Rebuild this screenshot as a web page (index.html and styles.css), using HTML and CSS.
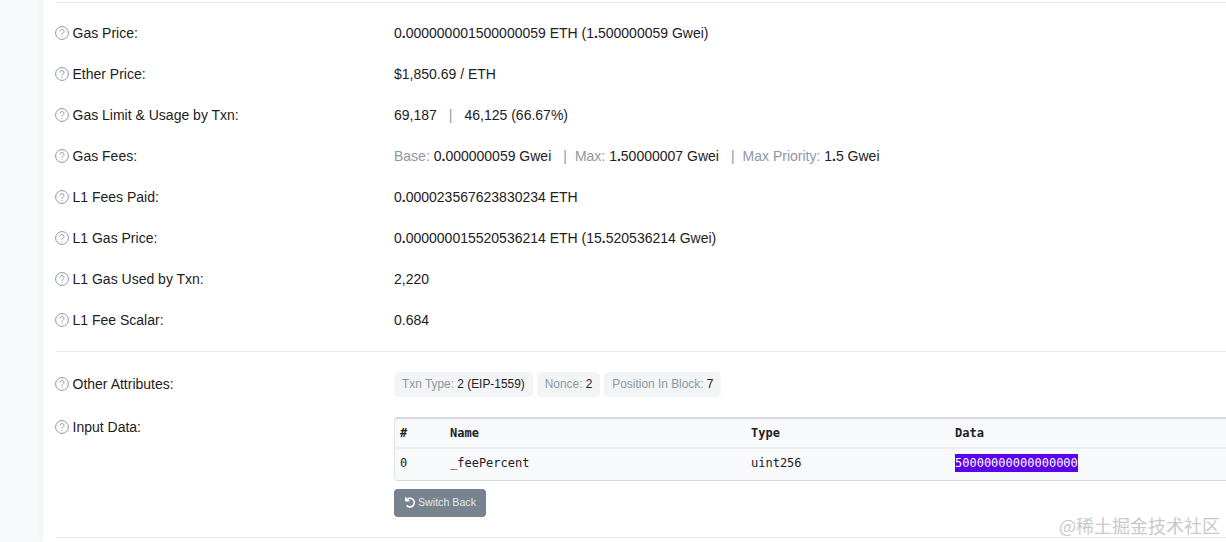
FILE: index.html
```html
<!DOCTYPE html>
<html lang="en">
<head>
<meta charset="utf-8">
<title>Transaction details</title>
<link rel="stylesheet" href="styles.css">
</head>
<body>
<main class="card">
  <hr class="rule rule-top">
  <section class="rows">
    <div class="row"><div class="label"><svg class="help" viewBox="0 0 14 14"><circle cx="7" cy="7" r="6.4"/><path d="M5.1 5.5a1.95 1.95 0 1 1 3 1.65c-.7.45-1.1.8-1.1 1.6"/><path d="M7 10v.9"/></svg>Gas Price:</div><div class="value">0<b>.</b>000000001500000059 ETH (1<b>.</b>500000059 Gwei)</div></div>
    <div class="row"><div class="label"><svg class="help" viewBox="0 0 14 14"><circle cx="7" cy="7" r="6.4"/><path d="M5.1 5.5a1.95 1.95 0 1 1 3 1.65c-.7.45-1.1.8-1.1 1.6"/><path d="M7 10v.9"/></svg>Ether Price:</div><div class="value">$1,850.69 / ETH</div></div>
    <div class="row"><div class="label"><svg class="help" viewBox="0 0 14 14"><circle cx="7" cy="7" r="6.4"/><path d="M5.1 5.5a1.95 1.95 0 1 1 3 1.65c-.7.45-1.1.8-1.1 1.6"/><path d="M7 10v.9"/></svg>Gas Limit &amp; Usage by Txn:</div><div class="value">69,187<span class="sep sep-wide">|</span>46,125 (66.67%)</div></div>
    <div class="row"><div class="label"><svg class="help" viewBox="0 0 14 14"><circle cx="7" cy="7" r="6.4"/><path d="M5.1 5.5a1.95 1.95 0 1 1 3 1.65c-.7.45-1.1.8-1.1 1.6"/><path d="M7 10v.9"/></svg>Gas Fees:</div><div class="value"><span class="muted">Base: </span>0<b>.</b>000000059 Gwei<span class="sep">|</span><span class="muted">Max: </span>1<b>.</b>50000007 Gwei<span class="sep">|</span><span class="muted">Max Priority: </span>1<b>.</b>5 Gwei</div></div>
    <div class="row"><div class="label"><svg class="help" viewBox="0 0 14 14"><circle cx="7" cy="7" r="6.4"/><path d="M5.1 5.5a1.95 1.95 0 1 1 3 1.65c-.7.45-1.1.8-1.1 1.6"/><path d="M7 10v.9"/></svg>L1 Fees Paid:</div><div class="value">0<b>.</b>000023567623830234 ETH</div></div>
    <div class="row"><div class="label"><svg class="help" viewBox="0 0 14 14"><circle cx="7" cy="7" r="6.4"/><path d="M5.1 5.5a1.95 1.95 0 1 1 3 1.65c-.7.45-1.1.8-1.1 1.6"/><path d="M7 10v.9"/></svg>L1 Gas Price:</div><div class="value">0<b>.</b>000000015520536214 ETH (15<b>.</b>520536214 Gwei)</div></div>
    <div class="row"><div class="label"><svg class="help" viewBox="0 0 14 14"><circle cx="7" cy="7" r="6.4"/><path d="M5.1 5.5a1.95 1.95 0 1 1 3 1.65c-.7.45-1.1.8-1.1 1.6"/><path d="M7 10v.9"/></svg>L1 Gas Used by Txn:</div><div class="value">2,220</div></div>
    <div class="row"><div class="label"><svg class="help" viewBox="0 0 14 14"><circle cx="7" cy="7" r="6.4"/><path d="M5.1 5.5a1.95 1.95 0 1 1 3 1.65c-.7.45-1.1.8-1.1 1.6"/><path d="M7 10v.9"/></svg>L1 Fee Scalar:</div><div class="value">0.684</div></div>
  </section>
  <hr class="rule">
  <section class="attrs">
    <div class="label label-attrs"><svg class="help" viewBox="0 0 14 14"><circle cx="7" cy="7" r="6.4"/><path d="M5.1 5.5a1.95 1.95 0 1 1 3 1.65c-.7.45-1.1.8-1.1 1.6"/><path d="M7 10v.9"/></svg>Other Attributes:</div>
    <div class="chips">
      <span class="chip"><span class="muted">Txn Type: </span>2 (EIP-1559)</span>
      <span class="chip"><span class="muted">Nonce: </span>2</span>
      <span class="chip"><span class="muted">Position In Block: </span>7</span>
    </div>
  </section>
  <section class="input">
    <div class="label label-top"><svg class="help" viewBox="0 0 14 14"><circle cx="7" cy="7" r="6.4"/><path d="M5.1 5.5a1.95 1.95 0 1 1 3 1.65c-.7.45-1.1.8-1.1 1.6"/><path d="M7 10v.9"/></svg>Input Data:</div>
    <div class="input-body">
      <div class="decoded">
        <div class="tr th"><span>#</span><span>Name</span><span>Type</span><span>Data</span></div>
        <div class="tr td"><span>0</span><span>_feePercent</span><span>uint256</span><span><mark class="sel">50000000000000000</mark></span></div>
      </div>
      <button class="btn" type="button"><svg class="undo" viewBox="0 0 12 12"><path d="M1.8 1.2v3.6h3.6"/><path d="M2.2 4.6A4.3 4.3 0 1 1 2.6 9.2"/></svg>Switch Back</button>
    </div>
  </section>
  <hr class="rule">
</main>
<div class="watermark">@稀土掘金技术社区</div>
</body>
</html>
```

FILE: styles.css
```css
html, body {
  margin: 0;
  height: 542px;
  overflow: hidden;
}
body {
  background: #f8f9fa;
  font-family: "Liberation Sans", Arial, sans-serif;
  font-size: 14px;
  color: #1e2022;
  position: relative;
}
.card {
  margin-left: 43px;
  width: 1300px;
  height: 542px;
  padding: 2px 13px 0;
  box-sizing: border-box;
  background: #fff;
  box-shadow: 0 0 6px rgba(151, 164, 175, .18);
}
.rule {
  margin: 0;
  border: 0;
  border-top: 1px solid #e7eaf3;
}
.rows {
  padding: 9px 0 11px;
}
.row {
  display: flex;
  align-items: center;
  height: 41px;
}
.label {
  width: 338px;
  flex: none;
  display: flex;
  align-items: center;
  color: #1e2022;
}
.label-attrs {
  margin-bottom: 1px;
}
.help {
  width: 14px;
  height: 14px;
  margin: 0 3.5px 0 -1px;
  flex: none;
  fill: none;
  stroke: #8c98a4;
  stroke-width: 1;
}
.value b {
  font-weight: 700;
}
.muted {
  color: #8c98a4;
}
.sep {
  color: #8c98a4;
  margin: 0 8px 0 12px;
}
.sep-wide {
  margin: 0 12px;
}
.attrs {
  display: flex;
  align-items: center;
  padding-top: 20px;
}
.chips {
  display: flex;
  gap: 4px;
}
.chip {
  font-size: 11.9px;
  line-height: 17px;
  padding: 4px 8px;
  border-radius: 5px;
  background: #f3f4f6;
}
.input {
  display: flex;
  padding-top: 20px;
}
.label-top {
  height: 20px;
}
.input-body {
  flex: 1;
}
.decoded {
  border: 1px solid #d5dae2;
  border-right: 0;
  border-top-width: 2px;
  border-left-color: #e1e4ea;
  border-radius: 4px 0 0 4px;
  background: #f8f9fb;
  font-family: "DejaVu Sans Mono", monospace;
  font-size: 12px;
  color: #1e2022;
}
.tr {
  display: grid;
  grid-template-columns: 50px 301px 204px 1fr;
  align-items: center;
  padding-left: 5px;
}
.th {
  height: 28px;
  font-weight: 700;
  border-bottom: 2px solid #eceef2;
}
.td {
  box-sizing: border-box;
  height: 31px;
  padding-bottom: 4px;
}
.sel {
  background: #5a00ea;
  color: #fff;
  padding: 2px 0;
}
.btn {
  display: flex;
  align-items: center;
  height: 28px;
  margin-top: 8px;
  padding: 0 10px 2px;
  border: 0;
  border-radius: 4px;
  background: #77838f;
  color: #e4e7ea;
  font: 10.65px "Liberation Sans", Arial, sans-serif;
}
.undo {
  width: 12px;
  height: 12px;
  margin-right: 2px;
  fill: none;
  stroke: #fff;
  stroke-width: 1.6;
}
.input + .rule {
  margin-top: 20px;
}
.watermark {
  position: absolute;
  right: 6px;
  bottom: 5px;
  font-family: "Noto Sans CJK SC", sans-serif;
  font-size: 18px;
  line-height: 24px;
  color: #c9c9c9;
}
```
